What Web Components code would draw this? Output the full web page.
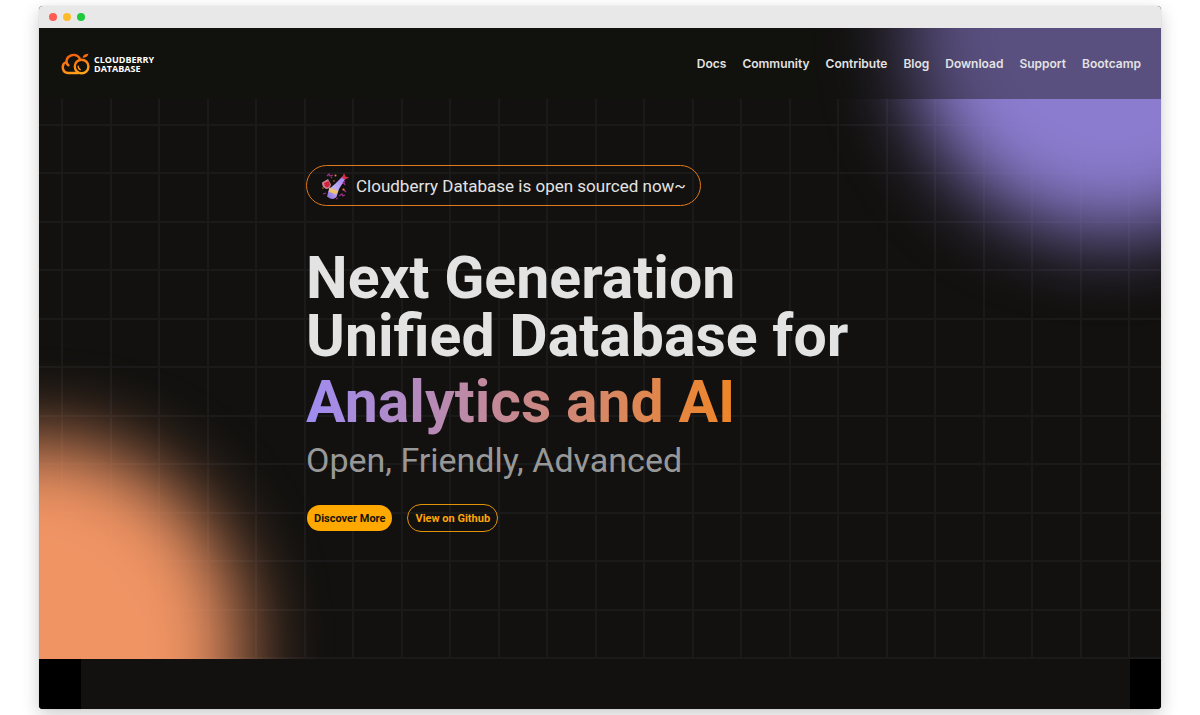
<!DOCTYPE html>
<html lang="en">
<head>
<meta charset="utf-8">
<meta name="viewport" content="width=device-width, initial-scale=1">
<title>Cloudberry Database</title>
<style>
  body { margin: 0; background: #fff; font-family: Roboto, Inter, sans-serif; }
</style>
</head>
<body>
<browser-window>
  <site-stage>
    <site-header slot="header">
      <site-logo></site-logo>
      <nav-link slot="nav" href="#docs">Docs</nav-link>
      <nav-link slot="nav" href="#community">Community</nav-link>
      <nav-link slot="nav" href="#contribute">Contribute</nav-link>
      <nav-link slot="nav" href="#blog">Blog</nav-link>
      <nav-link slot="nav" href="#download">Download</nav-link>
      <nav-link slot="nav" href="#support">Support</nav-link>
      <nav-link slot="nav" href="#bootcamp">Bootcamp</nav-link>
    </site-header>
    <site-hero>
      <news-pill slot="news" href="#news">Cloudberry Database is open sourced now~</news-pill>
      <span slot="title">Next Generation<br>Unified Database for</span>
      <span slot="accent">Analytics and AI</span>
      <span slot="tagline">Open, Friendly, Advanced</span>
      <action-button slot="actions" kind="solid">Discover More</action-button>
      <action-button slot="actions" kind="outline">View on Github</action-button>
    </site-hero>
  </site-stage>
  <section-edge></section-edge>
</browser-window>

<script>
const define = (name, html, setup) => {
  const template = document.createElement('template');
  template.innerHTML = html;
  customElements.define(name, class extends HTMLElement {
    constructor() {
      super();
      this.attachShadow({ mode: 'open' }).append(template.content.cloneNode(true));
    }
    connectedCallback() { if (setup) setup(this, this.shadowRoot); }
  });
};

define('browser-window', `
  <style>
    :host { display: block; margin: 6px 39px; border-radius: 4px; box-shadow: 0 6px 18px rgba(0,0,0,.2), 0 0 1px rgba(0,0,0,.3); }
    .clip { border-radius: 4px; overflow: hidden; background: #12110f; }
    .bar { display: flex; align-items: center; gap: 6px; height: 22px; padding: 0 10px; background: #e8e8e8; }
    .dot { width: 8px; height: 8px; border-radius: 50%; }
    .close { background: #ff5a54; }
    .min { background: #fdbb2a; }
    .max { background: #1fc93c; }
  </style>
  <div class="clip">
    <div class="bar"><span class="dot close"></span><span class="dot min"></span><span class="dot max"></span></div>
    <slot></slot>
  </div>`);

define('site-stage', `
  <style>
    :host { display: block; position: relative; isolation: isolate; overflow: hidden; background: #12110f; }
    .backdrop { position: absolute; inset: 0; z-index: -1; }
    .grid { position: absolute; inset: 71px 0 0;
      background-image:
        linear-gradient(90deg, transparent 22px, #1b1a1a 22px 24px, transparent 24px 71px, #1b1a1a 71px 73px, transparent 73px),
        linear-gradient(transparent 25px, #1b1a1a 25px 27px, transparent 27px 73px, #1b1a1a 73px 75px, transparent 75px);
      background-size: 97px 97px; }
    .glow { position: absolute; border-radius: 50%; filter: blur(40px); }
    .violet { width: 412px; height: 412px; top: -206px; right: -156px; background: #8c7ccf; }
    .orange { width: 416px; height: 416px; bottom: -196px; left: -212px; background: #f09464; }
  </style>
  <div class="backdrop"><div class="grid"></div><div class="glow violet"></div><div class="glow orange"></div></div>
  <slot name="header"></slot>
  <slot></slot>`);

define('site-header', `
  <style>
    :host { display: flex; align-items: center; justify-content: space-between; height: 71px; padding: 0 20px 0 22px; box-sizing: border-box; background: rgba(18,17,15,.41); }
    nav { display: flex; gap: 16px; }
  </style>
  <slot></slot>
  <nav><slot name="nav"></slot></nav>`);

define('nav-link', `
  <style>
    :host { display: block; }
    a { display: block; color: #e3e3e3; font-family: Inter, sans-serif; font-size: 12px; line-height: 16px; font-weight: 600; text-decoration: none; }
  </style>
  <a><slot></slot></a>`,
  (host, root) => { root.querySelector('a').href = host.getAttribute('href'); });

define('site-logo', `
  <style>
    :host { display: block; }
    a { display: flex; align-items: center; gap: 4px; color: #fff; text-decoration: none; font: 700 9px/9px "Open Sans", "Noto Sans", sans-serif; }
    svg { display: block; }
  </style>
  <a href="#home">
    <svg width="29" height="22" viewBox="0 0 29 22" fill="none" stroke="url(#g)" stroke-width="2.400" stroke-linecap="round" aria-hidden="true">
      <defs><linearGradient id="g" gradientUnits="userSpaceOnUse" x1="10" y1="0" x2="17" y2="22"><stop offset="0" stop-color="#f65a0c"/><stop offset="1" stop-color="#ffa51c"/></linearGradient></defs>
      <path d="M17 20H7.2A5.7 5.7 0 0 1 5.4 9A7.2 7.2 0 0 1 18.6 5.2"/>
      <path d="M5.4 9A4.8 4.8 0 0 0 7.4 12.2"/>
      <circle cx="20.6" cy="13.5" r="6.8"/>
      <path d="M17.2 13.2A3.6 3.6 0 0 0 19.2 16.6" stroke-width="1.500"/>
      <path d="M21.5 4.8C22 2 24 1 27.5.8C27 3.8 24.6 4.9 21.5 4.8Z" fill="#f76a10" stroke="none"/>
    </svg>
    <span>CLOUDBERRY<br>DATABASE</span>
  </a>`);

define('site-hero', `
  <style>
    :host { display: block; padding: 66px 24px 127px; }
    .column { display: flex; flex-direction: column; align-items: flex-start; margin: 0 auto; max-width: 588px; }
    h1 { margin: 43px 0 0; color: #e3e3e3; font-size: 59px; line-height: 58px; font-weight: 700; white-space: nowrap; }
    .accent { display: block; width: max-content; margin-top: 1px; line-height: 71px; color: transparent; background: linear-gradient(90deg, #9f8cf2, #f08526); background-clip: text; -webkit-background-clip: text; }
    p { margin: 0; color: #989898; font-size: 34px; line-height: 46px; white-space: nowrap; }
    .actions { display: flex; gap: 14px; margin-top: 21px; }
  </style>
  <div class="column">
    <slot name="news"></slot>
    <h1><slot name="title"></slot><span class="accent"><slot name="accent"></slot></span></h1>
    <p><slot name="tagline"></slot></p>
    <div class="actions"><slot name="actions"></slot></div>
  </div>`);

define('news-pill', `
  <style>
    :host { display: block; }
    a { display: flex; align-items: center; gap: 7px; height: 41px; padding: 0 14px; box-sizing: border-box; border: 1px solid #e07a1c; border-radius: 21px; color: #e3e3e3; font-size: 17px; line-height: 24px; text-decoration: none; white-space: nowrap; }
    svg { display: block; }
  </style>
  <a>
    <svg width="28" height="28" viewBox="0 0 28 28" aria-hidden="true">
      <defs><linearGradient id="b" x1="0" y1="1" x2="1" y2="0"><stop offset="0" stop-color="#8a6bd8"/><stop offset=".45" stop-color="#c3aef5"/><stop offset="1" stop-color="#9c7cf0"/></linearGradient></defs>
      <g fill="none" stroke="#9b2f86" stroke-width="1.3"><path d="M6 4l2-2 1 2 3-1M10 6l1-1M20 12l3-1 1 2M23 18l2 2M18 24l3-2 1 2 2-1M2 22l3-1M15 27l2-1M21 8l3 2"/></g>
      <g fill="#f0862e"><circle cx="14.5" cy="3.5" r="1"/><circle cx="22.5" cy="17.5" r="1.1"/><circle cx="2" cy="16" r=".7"/><circle cx="13" cy="9" r=".7"/></g>
      <path d="M22 4L24.500 6.500L18 17L15.500 25Q11 29 6 24.500L8 17L14 12Z" fill="url(#b)"/>
      <path d="M9 15.500L17 19L15 22.500L7.500 19.500Z" fill="#edc46c"/>
      <path d="M21 6L23 1L24.500 4.500L28 5.500L24 7.500Z" fill="#d92e3e"/>
      <path d="M1 10.500L7 7L10 12.500Q9 17 5 17Q1 15 1 10.500Z" fill="#c98795"/>
      <path d="M3 11L7.500 9L9 12.500Q8 15.500 5.500 15.500Q3 14 3 11Z" fill="#d51f3a"/>
      <path d="M8 16L10 18" stroke="#d3b6ca" stroke-width="1"/>
    </svg>
    <span><slot></slot></span>
  </a>`,
  (host, root) => { root.querySelector('a').href = host.getAttribute('href'); });

define('action-button', `
  <style>
    :host { display: block; }
    button { display: block; height: 28px; margin: 0; padding: 2px 7px 0; border: 1px solid #e09208; border-radius: 14px; background: transparent; color: #ffa508; font-family: inherit; font-size: 11px; line-height: 16px; font-weight: 700; white-space: nowrap; cursor: pointer; }
    :host([kind="solid"]) button { border-color: transparent; background: #ffa800; background-clip: padding-box; color: #17130a; }
  </style>
  <button type="button"><slot></slot></button>`);

define('section-edge', `
  <style>
    :host { display: flex; justify-content: space-between; height: 50px; background: #12110f; }
    .left, .right { background: #000; }
    .left { width: 42px; }
    .right { width: 31px; }
  </style>
  <div class="left"></div><div class="right"></div>`);
</script>
</body>
</html>
